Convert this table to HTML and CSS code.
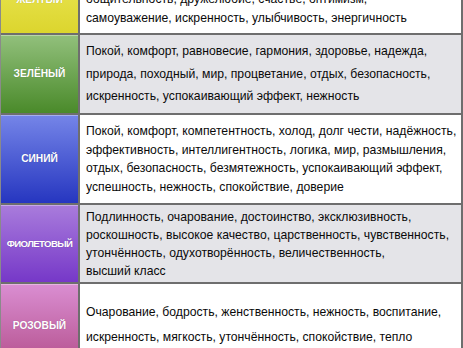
FILE: index.html
```html
<!DOCTYPE html>
<html lang="ru">
<head>
<meta charset="utf-8">
<title>Цвета</title>
<link rel="stylesheet" href="styles.css">
</head>
<body>
<div class="table">
  <div class="row r-yellow">
    <div class="label">ЖЁЛТЫЙ</div>
    <div class="text white">Радость, тепло, оптимизм, открытость, активность, веселье,<br>общительность, дружелюбие, счастье, оптимизм,<br>самоуважение, искренность, улыбчивость, энергичность</div>
  </div>
  <div class="row r-green">
    <div class="label">ЗЕЛЁНЫЙ</div>
    <div class="text gray">Покой, комфорт, равновесие, гармония, здоровье, надежда,<br>природа, походный, мир, процветание, отдых, безопасность,<br>искренность, успокаивающий эффект, нежность</div>
  </div>
  <div class="row r-blue">
    <div class="label">СИНИЙ</div>
    <div class="text white">Покой, комфорт, компетентность, холод, долг чести, надёжность,<br>эффективность, интеллигентность, логика, мир, размышления,<br>отдых, безопасность, безмятежность, успокаивающий эффект,<br>успешность, нежность, спокойствие, доверие</div>
  </div>
  <div class="row r-violet">
    <div class="label narrow">ФИОЛЕТОВЫЙ</div>
    <div class="text gray">Подлинность, очарование, достоинство, эксклюзивность,<br>роскошность, высокое качество, царственность, чувственность,<br>утончённость, одухотворённость, величественность,<br>высший класс</div>
  </div>
  <div class="row r-pink">
    <div class="label">РОЗОВЫЙ</div>
    <div class="text white">Очарование, бодрость, женственность, нежность, воспитание,<br>искренность, мягкость, утончённость, спокойствие, тепло</div>
  </div>
</div>
</body>
</html>
```
FILE: styles.css
```css
html, body {
  margin: 0;
  padding: 0;
  background: #ffffff;
  overflow: hidden;
}
.table {
  width: 460px;
  border-left: 1px solid #8a8a8a;
  border-right: 2px solid #6e6e6e;
  font-family: "Liberation Sans", Arial, sans-serif;
  color: #0a0a0a;
}
.row {
  display: flex;
  border-bottom: 2px solid #6e6e6e;
}
.label {
  width: 77px;
  flex: none;
  display: flex;
  align-items: center;
  justify-content: center;
  border-right: 2px solid #6e6e6e;
  color: #ffffff;
  font-weight: bold;
  font-size: 10.2px;
  white-space: nowrap;
  text-shadow: 0 0 1px rgba(0,0,0,0.25);
  box-shadow: inset 0 1px 0 rgba(255,255,255,0.35);
}
.label.narrow {
  letter-spacing: -0.6px;
  font-size: 9.6px;
}
.text {
  flex: 1;
  min-width: 0;
  display: flex;
  align-items: center;
  padding: 0 0 0 6px;
  font-size: 12.2px;
  white-space: nowrap;
  overflow: hidden;
}
.white { background: #ffffff; }
.gray { background: #e4e4e8; }

.r-yellow { height: 68px; margin-top: -35px; line-height: 19px; }
.r-yellow .label { background: linear-gradient(#ece95a, #dcd52e); }
.r-green { height: 78px; line-height: 22.5px; }
.r-green .label { background: linear-gradient(#92c07c, #4a8a2a); }
.r-blue { height: 88px; line-height: 18.5px; }
.r-blue .label { background: linear-gradient(#7585e8, #2636c0); }
.r-violet { height: 77px; line-height: 18px; }
.r-violet .label { background: linear-gradient(#a97cdc, #7638c8); }
.r-pink { height: 82px; line-height: 25px; }
.r-pink .label { background: linear-gradient(#da8ed2, #b4508c); }
```
